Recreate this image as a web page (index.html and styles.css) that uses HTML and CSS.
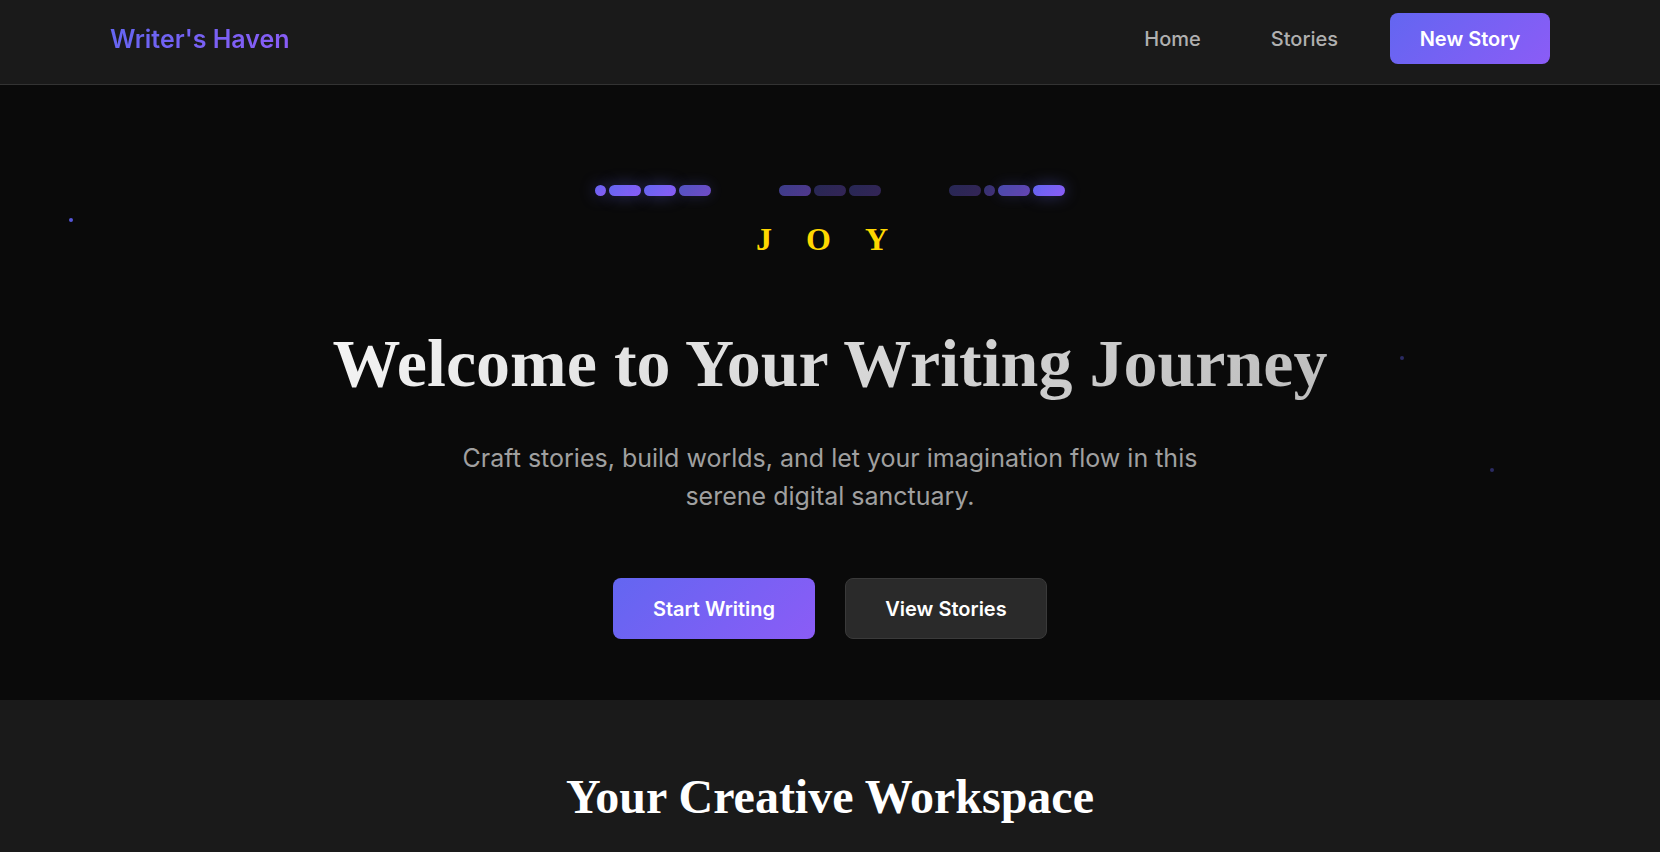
FILE: index.html
```html
<!DOCTYPE html>
<html lang="en">
<head>
<meta charset="UTF-8">
<title>Writer's Haven</title>
<link rel="stylesheet" href="styles.css">
</head>
<body>
<nav class="nav">
  <div class="nav-inner">
    <a class="logo" href="#">Writer's Haven</a>
    <div class="nav-links">
      <a class="nav-link" href="#">Home</a>
      <a class="nav-link" href="#">Stories</a>
      <a class="btn-new" href="#">New Story</a>
    </div>
  </div>
</nav>
<section class="hero">
  <span class="star star-a"></span>
  <span class="star star-b"></span>
  <span class="star star-c"></span>
  <div class="morse">
    <div class="group">
      <span class="dot o10"></span><span class="dash o10"></span><span class="dash o10"></span><span class="dash o8"></span>
    </div>
    <div class="group">
      <span class="dash o5"></span><span class="dash o3"></span><span class="dash o3"></span>
    </div>
    <div class="group">
      <span class="dash o3"></span><span class="dot o4"></span><span class="dash o7"></span><span class="dash o10"></span>
    </div>
  </div>
  <div class="word">JOY</div>
  <h1 class="title">Welcome to Your Writing Journey</h1>
  <p class="subtitle">Craft stories, build worlds, and let your imagination flow in this serene digital sanctuary.</p>
  <div class="actions">
    <a class="btn btn-primary" href="#">Start Writing</a>
    <a class="btn btn-secondary" href="#">View Stories</a>
  </div>
</section>
<section class="workspace">
  <h2 class="section-title">Your Creative Workspace</h2>
</section>
</body>
</html>
```

FILE: styles.css
```css
* { box-sizing: border-box; }
html, body { margin: 0; padding: 0; }
body {
  background: #1a1a1a;
  color: #e0e0e0;
  font-family: Inter, "Noto Sans", sans-serif;
  overflow: hidden;
}
a { text-decoration: none; }

.nav {
  background: #1a1a1a;
  border-bottom: 1px solid #333333;
}
.nav-inner {
  max-width: 1440px;
  margin: 0 auto;
  padding: 13px 0 20px;
  display: flex;
  align-items: center;
  justify-content: space-between;
}
.logo {
  font-size: 25px;
  font-weight: 600;
  background: linear-gradient(135deg, #6366f1, #8b5cf6);
  -webkit-background-clip: text;
  background-clip: text;
  color: transparent;
}
.nav-links {
  display: flex;
  align-items: center;
  gap: 32px;
}
.nav-link {
  color: #b0b0b0;
  font-size: 20px;
  font-weight: 500;
  padding: 10px 20px;
}
.nav-link + .nav-link {
  margin-left: -2px;
}
.btn-new {
  display: flex;
  align-items: center;
  justify-content: center;
  width: 160px;
  height: 51px;
  border-radius: 8px;
  background: linear-gradient(135deg, #6366f1, #8b5cf6);
  color: #ffffff;
  font-size: 20px;
  font-weight: 600;
}

.hero {
  position: relative;
  background: #0a0a0a;
  height: 615px;
  padding-top: 100px;
  display: flex;
  flex-direction: column;
  align-items: center;
}
.star {
  position: absolute;
  width: 4px;
  height: 4px;
  border-radius: 50%;
}
.star-a { left: 69px; top: 133px; background: #5556d8; }
.star-b { left: 1400px; top: 271px; background: #2b2b62; }
.star-c { left: 1490px; top: 383px; background: #2b2b62; }

.morse {
  display: flex;
  gap: 68px;
  height: 11px;
}
.group {
  display: flex;
  align-items: center;
  gap: 3px;
}
.dot, .dash {
  height: 11px;
  border-radius: 6px;
  background: linear-gradient(135deg, #6366f1, #8b5cf6);
}
.dot { width: 11px; }
.dash { width: 32px; }
.o10 { opacity: 1; box-shadow: 0 0 16px rgba(99, 102, 241, 0.4); }
.o8 { opacity: 0.8; box-shadow: 0 0 14px rgba(99, 102, 241, 0.3); }
.o7 { opacity: 0.7; box-shadow: 0 0 14px rgba(99, 102, 241, 0.3); }
.o5 { opacity: 0.55; }
.o4 { opacity: 0.45; }
.o3 { opacity: 0.32; }

.word {
  margin-top: 24px;
  font-family: "Liberation Serif", "DejaVu Serif", serif;
  font-weight: 700;
  font-size: 32px;
  line-height: 38px;
  letter-spacing: 34px;
  color: #ffd700;
  padding-left: 18px;
}

.title {
  margin: 65px 0 0;
  font-family: "Liberation Serif", "DejaVu Serif", serif;
  font-weight: 700;
  font-size: 68px;
  line-height: 80px;
  background: linear-gradient(135deg, #f5f5f5 0%, #bdbdbd 100%);
  -webkit-background-clip: text;
  background-clip: text;
  color: transparent;
}

.subtitle {
  margin: 36px 0 0;
  max-width: 800px;
  text-align: center;
  font-size: 25px;
  line-height: 38px;
  color: #a0a0a0;
}

.actions {
  margin-top: 63px;
  display: flex;
  gap: 30px;
}
.btn {
  width: 202px;
  height: 61px;
  display: flex;
  align-items: center;
  justify-content: center;
  border-radius: 8px;
  color: #ffffff;
  font-size: 20px;
  font-weight: 600;
}
.btn-primary {
  background: linear-gradient(135deg, #6366f1, #8b5cf6);
}
.btn-secondary {
  background: #2a2a2a;
  border: 1px solid #3a3a3a;
}

.workspace {
  background: #1a1a1a;
  padding-top: 68px;
  height: 152px;
}
.section-title {
  margin: 0;
  text-align: center;
  font-family: "Liberation Serif", "DejaVu Serif", serif;
  font-weight: 700;
  font-size: 48px;
  line-height: 58px;
  color: #ffffff;
}
```
